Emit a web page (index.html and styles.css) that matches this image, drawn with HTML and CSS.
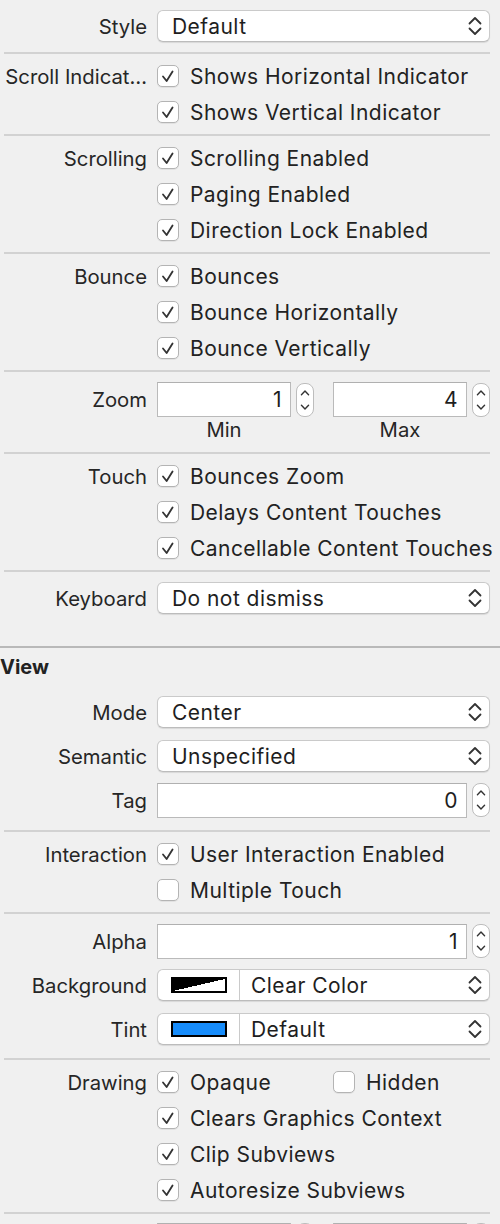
FILE: index.html
```html
<!DOCTYPE html>
<html>
<head>
<meta charset="utf-8">
<link rel="stylesheet" href="styles.css">
</head>
<body>
<div class="panel">

  <section class="sec">
    <div class="row prow">
      <div class="lbl">Style</div>
      <div class="popup"><span class="ptext">Default</span><svg class="chev" viewBox="0 0 14 22"><path d="M1.5 8.5 L7 3 L12.5 8.5 M1.5 13.5 L7 19 L12.5 13.5"/></svg></div>
    </div>
  </section>
  <div class="sep"></div>

  <section class="sec">
    <div class="row crow">
      <div class="lbl">Scroll Indicat…</div>
      <div class="cb"><span class="box on"><svg viewBox="0 0 22 22"><path d="M5.5 11.5 L9.5 16.5 L16 6"/></svg></span><span class="ctext">Shows Horizontal Indicator</span></div>
    </div>
    <div class="row crow">
      <div class="lbl"></div>
      <div class="cb"><span class="box on"><svg viewBox="0 0 22 22"><path d="M5.5 11.5 L9.5 16.5 L16 6"/></svg></span><span class="ctext">Shows Vertical Indicator</span></div>
    </div>
  </section>
  <div class="sep"></div>

  <section class="sec">
    <div class="row crow">
      <div class="lbl">Scrolling</div>
      <div class="cb"><span class="box on"><svg viewBox="0 0 22 22"><path d="M5.5 11.5 L9.5 16.5 L16 6"/></svg></span><span class="ctext">Scrolling Enabled</span></div>
    </div>
    <div class="row crow">
      <div class="lbl"></div>
      <div class="cb"><span class="box on"><svg viewBox="0 0 22 22"><path d="M5.5 11.5 L9.5 16.5 L16 6"/></svg></span><span class="ctext">Paging Enabled</span></div>
    </div>
    <div class="row crow">
      <div class="lbl"></div>
      <div class="cb"><span class="box on"><svg viewBox="0 0 22 22"><path d="M5.5 11.5 L9.5 16.5 L16 6"/></svg></span><span class="ctext">Direction Lock Enabled</span></div>
    </div>
  </section>
  <div class="sep"></div>

  <section class="sec">
    <div class="row crow">
      <div class="lbl">Bounce</div>
      <div class="cb"><span class="box on"><svg viewBox="0 0 22 22"><path d="M5.5 11.5 L9.5 16.5 L16 6"/></svg></span><span class="ctext">Bounces</span></div>
    </div>
    <div class="row crow">
      <div class="lbl"></div>
      <div class="cb"><span class="box on"><svg viewBox="0 0 22 22"><path d="M5.5 11.5 L9.5 16.5 L16 6"/></svg></span><span class="ctext">Bounce Horizontally</span></div>
    </div>
    <div class="row crow">
      <div class="lbl"></div>
      <div class="cb"><span class="box on"><svg viewBox="0 0 22 22"><path d="M5.5 11.5 L9.5 16.5 L16 6"/></svg></span><span class="ctext">Bounce Vertically</span></div>
    </div>
  </section>
  <div class="sep"></div>

  <section class="sec sec-zoom">
    <div class="row zrow">
      <div class="lbl">Zoom</div>
      <div class="halves">
        <div class="fgroup">
          <div class="field">1</div>
          <div class="stepper"><svg viewBox="0 0 18 34"><path d="M5 11 L9 7 L13 11 M5 23 L9 27 L13 23"/></svg></div>
        </div>
        <div class="fgroup">
          <div class="field">4</div>
          <div class="stepper"><svg viewBox="0 0 18 34"><path d="M5 11 L9 7 L13 11 M5 23 L9 27 L13 23"/></svg></div>
        </div>
      </div>
    </div>
    <div class="row subrow">
      <div class="lbl"></div>
      <div class="halves">
        <div class="sublbl">Min</div>
        <div class="sublbl">Max</div>
      </div>
    </div>
  </section>
  <div class="sep"></div>

  <section class="sec">
    <div class="row crow">
      <div class="lbl">Touch</div>
      <div class="cb"><span class="box on"><svg viewBox="0 0 22 22"><path d="M5.5 11.5 L9.5 16.5 L16 6"/></svg></span><span class="ctext">Bounces Zoom</span></div>
    </div>
    <div class="row crow">
      <div class="lbl"></div>
      <div class="cb"><span class="box on"><svg viewBox="0 0 22 22"><path d="M5.5 11.5 L9.5 16.5 L16 6"/></svg></span><span class="ctext">Delays Content Touches</span></div>
    </div>
    <div class="row crow">
      <div class="lbl"></div>
      <div class="cb"><span class="box on"><svg viewBox="0 0 22 22"><path d="M5.5 11.5 L9.5 16.5 L16 6"/></svg></span><span class="ctext">Cancellable Content Touches</span></div>
    </div>
  </section>
  <div class="sep"></div>

  <section class="sec sec-kb">
    <div class="row prow">
      <div class="lbl">Keyboard</div>
      <div class="popup"><span class="ptext">Do not dismiss</span><svg class="chev" viewBox="0 0 14 22"><path d="M1.5 8.5 L7 3 L12.5 8.5 M1.5 13.5 L7 19 L12.5 13.5"/></svg></div>
    </div>
  </section>
  <div class="sep-full"></div>

  <div class="header">View</div>

  <section class="sec sec-view">
    <div class="row prow">
      <div class="lbl">Mode</div>
      <div class="popup"><span class="ptext">Center</span><svg class="chev" viewBox="0 0 14 22"><path d="M1.5 8.5 L7 3 L12.5 8.5 M1.5 13.5 L7 19 L12.5 13.5"/></svg></div>
    </div>
    <div class="row prow">
      <div class="lbl">Semantic</div>
      <div class="popup"><span class="ptext">Unspecified</span><svg class="chev" viewBox="0 0 14 22"><path d="M1.5 8.5 L7 3 L12.5 8.5 M1.5 13.5 L7 19 L12.5 13.5"/></svg></div>
    </div>
    <div class="row prow">
      <div class="lbl">Tag</div>
      <div class="fgroup wide">
        <div class="field">0</div>
        <div class="stepper"><svg viewBox="0 0 18 34"><path d="M5 11 L9 7 L13 11 M5 23 L9 27 L13 23"/></svg></div>
      </div>
    </div>
  </section>
  <div class="sep"></div>

  <section class="sec">
    <div class="row crow">
      <div class="lbl">Interaction</div>
      <div class="cb"><span class="box on"><svg viewBox="0 0 22 22"><path d="M5.5 11.5 L9.5 16.5 L16 6"/></svg></span><span class="ctext">User Interaction Enabled</span></div>
    </div>
    <div class="row crow">
      <div class="lbl"></div>
      <div class="cb"><span class="box"></span><span class="ctext">Multiple Touch</span></div>
    </div>
  </section>
  <div class="sep"></div>

  <section class="sec sec-alpha">
    <div class="row prow">
      <div class="lbl">Alpha</div>
      <div class="fgroup wide">
        <div class="field">1</div>
        <div class="stepper"><svg viewBox="0 0 18 34"><path d="M5 11 L9 7 L13 11 M5 23 L9 27 L13 23"/></svg></div>
      </div>
    </div>
    <div class="row prow">
      <div class="lbl">Background</div>
      <div class="popup cpopup"><span class="swatchcell"><span class="swatch clear"></span></span><span class="ptext">Clear Color</span><svg class="chev" viewBox="0 0 14 22"><path d="M1.5 8.5 L7 3 L12.5 8.5 M1.5 13.5 L7 19 L12.5 13.5"/></svg></div>
    </div>
    <div class="row prow">
      <div class="lbl">Tint</div>
      <div class="popup cpopup"><span class="swatchcell"><span class="swatch blue"></span></span><span class="ptext">Default</span><svg class="chev" viewBox="0 0 14 22"><path d="M1.5 8.5 L7 3 L12.5 8.5 M1.5 13.5 L7 19 L12.5 13.5"/></svg></div>
    </div>
  </section>
  <div class="sep"></div>

  <section class="sec">
    <div class="row crow">
      <div class="lbl">Drawing</div>
      <div class="halves">
        <div class="cb"><span class="box on"><svg viewBox="0 0 22 22"><path d="M5.5 11.5 L9.5 16.5 L16 6"/></svg></span><span class="ctext">Opaque</span></div>
        <div class="cb"><span class="box"></span><span class="ctext">Hidden</span></div>
      </div>
    </div>
    <div class="row crow">
      <div class="lbl"></div>
      <div class="cb"><span class="box on"><svg viewBox="0 0 22 22"><path d="M5.5 11.5 L9.5 16.5 L16 6"/></svg></span><span class="ctext">Clears Graphics Context</span></div>
    </div>
    <div class="row crow">
      <div class="lbl"></div>
      <div class="cb"><span class="box on"><svg viewBox="0 0 22 22"><path d="M5.5 11.5 L9.5 16.5 L16 6"/></svg></span><span class="ctext">Clip Subviews</span></div>
    </div>
    <div class="row crow">
      <div class="lbl"></div>
      <div class="cb"><span class="box on"><svg viewBox="0 0 22 22"><path d="M5.5 11.5 L9.5 16.5 L16 6"/></svg></span><span class="ctext">Autoresize Subviews</span></div>
    </div>
  </section>
  <div class="sep"></div>

  <section class="sec sec-stretch">
    <div class="row prow">
      <div class="lbl"></div>
      <div class="halves">
        <div class="fgroup">
          <div class="field"></div>
          <div class="stepper"><svg viewBox="0 0 18 34"><path d="M5 11 L9 7 L13 11 M5 23 L9 27 L13 23"/></svg></div>
        </div>
        <div class="fgroup">
          <div class="field"></div>
          <div class="stepper"><svg viewBox="0 0 18 34"><path d="M5 11 L9 7 L13 11 M5 23 L9 27 L13 23"/></svg></div>
        </div>
      </div>
    </div>
  </section>

</div>
</body>
</html>
```

FILE: styles.css
```css
html, body {
  margin: 0;
  padding: 0;
  background: #f0f0f0;
}
body {
  width: 500px;
  height: 1224px;
  overflow: hidden;
  font-family: "Inter", "Noto Sans", sans-serif;
  font-size: 21px;
  letter-spacing: 0.45px;
  color: #222222;
}
.panel {
  width: 500px;
}
.sec {
  padding: 4px 10px 4px 0;
}
.sec-zoom { padding-bottom: 11px; }
.sec-kb { padding-bottom: 26px; }
.sec-view { padding-bottom: 8px; }
.sec-alpha { padding-top: 5px; padding-bottom: 7px; }

.sep {
  height: 2px;
  background: #d2d2d2;
  margin: 0 10px 0 4px;
}
.sep-full {
  height: 2px;
  background: #b9b9b9;
}
.header {
  height: 38px;
  display: flex;
  align-items: center;
  font-weight: 700;
  letter-spacing: 0;
  font-size: 20px;
  padding-left: 0;
  color: #222222;
}

.row {
  display: grid;
  grid-template-columns: 147px 1fr;
  column-gap: 10px;
  align-items: center;
}
.crow { height: 36px; }
.prow { height: 44px; }
.zrow { height: 35px; margin-top: 6px; }
.subrow { height: 24px; }

.lbl {
  text-align: right;
  white-space: nowrap;
  overflow: hidden;
  color: #262626;
  font-size: 20.3px;
  letter-spacing: 0;
}

.cb {
  display: flex;
  align-items: center;
  white-space: nowrap;
}
.box {
  width: 22px;
  height: 22px;
  box-sizing: border-box;
  border: 1px solid #b4b4b4;
  border-radius: 5px;
  background: #ffffff;
  box-shadow: 0 1px 0 rgba(0,0,0,0.06);
  flex: none;
  display: flex;
}
.box svg {
  width: 20px;
  height: 20px;
}
.box svg path {
  fill: none;
  stroke: #333333;
  stroke-width: 2;
  stroke-linecap: round;
  stroke-linejoin: round;
}
.ctext {
  margin-left: 11px;
}

.popup {
  height: 32px;
  box-sizing: border-box;
  border: 1px solid #cacaca;
  border-bottom-color: #bcbcbc;
  border-radius: 6px;
  background: #ffffff;
  box-shadow: 0 1px 1px rgba(0,0,0,0.10);
  display: flex;
  align-items: center;
  padding: 0 7px 0 14px;
}
.ptext {
  flex: 1;
  white-space: nowrap;
  color: #1e1e1e;
}
.chev {
  width: 14px;
  height: 22px;
  flex: none;
}
.chev path {
  fill: none;
  stroke: #333333;
  stroke-width: 1.8;
  stroke-linecap: round;
  stroke-linejoin: round;
}

.cpopup {
  padding-left: 0;
}
.swatchcell {
  width: 81px;
  height: 100%;
  border-right: 1px solid #cacaca;
  display: flex;
  align-items: center;
  justify-content: center;
  margin-right: 11px;
  flex: none;
}
.swatch {
  width: 56px;
  height: 16px;
  box-sizing: border-box;
  border: 2px solid #000000;
}
.swatch.clear {
  background: linear-gradient(to bottom right, #000000 50%, #ffffff 50%);
}
.swatch.blue {
  background: #168cfb;
}

.halves {
  display: grid;
  grid-template-columns: 176px 1fr;
  align-items: center;
}
.fgroup {
  display: flex;
  align-items: center;
  gap: 5px;
}
.field {
  width: 134px;
  height: 35px;
  box-sizing: border-box;
  border: 1px solid #bababa;
  border-top-color: #b0b0b0;
  background: #ffffff;
  text-align: right;
  padding-right: 8px;
  line-height: 33px;
  color: #1e1e1e;
}
.fgroup.wide .field {
  width: 310px;
}
.stepper {
  width: 18px;
  height: 34px;
  box-sizing: border-box;
  border: 1px solid #bdbdbd;
  border-radius: 8px;
  background: #ffffff;
  display: flex;
  flex: none;
}
.stepper svg {
  width: 16px;
  height: 32px;
}
.stepper svg path {
  fill: none;
  stroke: #333333;
  stroke-width: 1.6;
  stroke-linecap: round;
  stroke-linejoin: round;
}
.sublbl {
  width: 134px;
  text-align: center;
  color: #262626;
  font-size: 20.3px;
  letter-spacing: 0;
}
```
